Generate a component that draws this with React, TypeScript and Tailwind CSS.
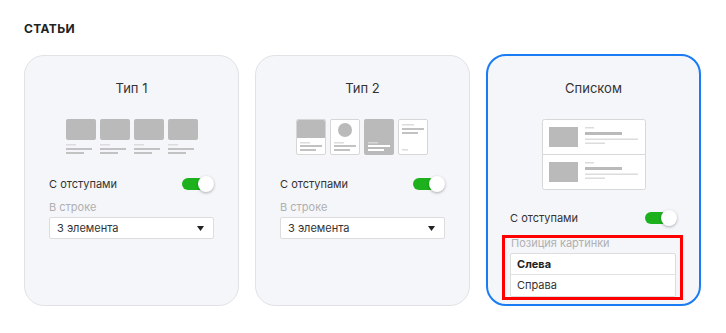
import React from "react";

const Toggle = () => (
  <div className="relative w-[32px] h-[16px] shrink-0">
    <div className="absolute left-0 top-[2px] w-[28px] h-[12px] rounded-full bg-[#1db21d]" />
    <div className="absolute right-0 top-0 w-[16px] h-[16px] rounded-full bg-white shadow-[0_1px_3px_rgba(0,0,0,0.3)]" />
  </div>
);

const Select = () => (
  <div className="mt-[3px] h-[22px] flex items-center justify-between pl-[7px] pr-[9px] bg-white border border-[#dddddd] rounded-[2px] text-[11px] text-[#333]">
    <span>3 элемента</span>
    <svg width="7" height="5" viewBox="0 0 7 5">
      <path d="M0 0 H7 L3.5 5 Z" fill="#222" />
    </svg>
  </div>
);

const Type1Art = () => (
  <svg width="132" height="36" viewBox="0 0 132 36">
    {[0, 1, 2, 3].map((i) => {
      const x = i * 34;
      return (
        <g key={i}>
          <rect x={x} y={0} width={30} height={21} rx={2} fill="#bababa" />
          <rect x={x} y={25} width={10} height={1.5} fill="#dcdcdc" />
          <rect x={x} y={29} width={26} height={2} fill="#c2c2c2" />
          <rect x={x} y={33} width={18} height={2} fill="#c2c2c2" />
        </g>
      );
    })}
  </svg>
);

const Type2Art = () => (
  <svg width="133" height="36" viewBox="0 0 133 36">
    <rect x={0.5} y={0.5} width={29} height={35} rx={1.5} fill="#fff" stroke="#d6d6d6" />
    <path d="M1 2.5 Q1 1 2.5 1 H27.5 Q29 1 29 2.5 V19 H1 Z" fill="#bababa" />
    <rect x={4} y={23} width={10} height={1.5} fill="#dcdcdc" />
    <rect x={4} y={26} width={22} height={2} fill="#c2c2c2" />
    <rect x={4} y={30} width={16} height={2} fill="#c2c2c2" />
    <rect x={34.5} y={0.5} width={29} height={35} rx={1.5} fill="#fff" stroke="#d6d6d6" />
    <circle cx={49} cy={11} r={7} fill="#bababa" />
    <rect x={38} y={23} width={10} height={1.5} fill="#dcdcdc" />
    <rect x={38} y={26} width={22} height={2} fill="#c2c2c2" />
    <rect x={38} y={30} width={16} height={2} fill="#c2c2c2" />
    <rect x={68} y={0} width={30} height={36} rx={2} fill="#bababa" />
    <rect x={72} y={23} width={10} height={1.5} fill="#d8d8d8" />
    <rect x={72} y={26} width={22} height={2} fill="#ffffff" />
    <rect x={72} y={30} width={16} height={2} fill="#ffffff" />
    <rect x={102.5} y={0.5} width={29} height={35} rx={1.5} fill="#fff" stroke="#d6d6d6" />
    <rect x={106} y={5} width={12} height={1.5} fill="#dcdcdc" />
    <rect x={106} y={9} width={22} height={2} fill="#c2c2c2" />
    <rect x={106} y={13} width={16} height={2} fill="#c2c2c2" />
    <rect x={106} y={30} width={6} height={1.5} fill="#dcdcdc" />
  </svg>
);

const ListArt = () => (
  <svg width="104" height="71" viewBox="0 0 104 71">
    <rect x={0.5} y={0.5} width={103} height={70} rx={2} fill="#fff" stroke="#d8d8d8" />
    <line x1={0.5} y1={35.5} x2={103.5} y2={35.5} stroke="#d8d8d8" />
    {[0, 35].map((dy) => (
      <g key={dy}>
        <rect x={7} y={8 + dy} width={29} height={20} fill="#bababa" />
        <rect x={43} y={8 + dy} width={9} height={1.5} fill="#dcdcdc" />
        <rect x={43} y={13 + dy} width={37} height={3} fill="#bababa" />
        <rect x={43} y={19.5 + dy} width={53} height={1.5} fill="#dcdcdc" />
        <rect x={43} y={23.5 + dy} width={20} height={1.5} fill="#dcdcdc" />
      </g>
    ))}
  </svg>
);

export default function App() {
  return (
    <div
      className="w-[726px] h-[333px] bg-white pl-[24px] pt-[22px]"
      style={{ fontFamily: "Inter, 'Noto Sans', sans-serif" }}
    >
      <div className="text-[12px] leading-[14px] font-bold text-[#222] tracking-[0.03em]">СТАТЬИ</div>
      <div className="mt-[19px] flex items-start gap-[16px]">
        <div className="w-[215px] h-[251px] rounded-[20px] border border-[#e2e2e6] bg-[#f5f6fa] flex flex-col pt-[24px] px-[24px]">
          <div className="text-center text-[13px] leading-[16px] text-[#333]">Тип 1</div>
          <div className="mt-[23px] flex justify-center">
            <Type1Art />
          </div>
          <div className="mt-[21px] flex items-center justify-between h-[16px]">
            <span className="text-[11px] text-[#333]">С отступами</span>
            <Toggle />
          </div>
          <div className="mt-[8px] text-[11px] leading-[14px] text-[#b0b0b0]">В строке</div>
          <Select />
        </div>
        <div className="w-[215px] h-[251px] rounded-[20px] border border-[#e2e2e6] bg-[#f5f6fa] flex flex-col pt-[24px] px-[24px]">
          <div className="text-center text-[13px] leading-[16px] text-[#333]">Тип 2</div>
          <div className="mt-[23px] flex justify-center">
            <Type2Art />
          </div>
          <div className="mt-[21px] flex items-center justify-between h-[16px]">
            <span className="text-[11px] text-[#333]">С отступами</span>
            <Toggle />
          </div>
          <div className="mt-[8px] text-[11px] leading-[14px] text-[#b0b0b0]">В строке</div>
          <Select />
        </div>
        <div className="-mt-px w-[215px] h-[252px] rounded-[20px] border-2 border-[#1a7cf5] bg-[#f5f6fa] flex flex-col pt-[24px] px-[22px]">
          <div className="text-center text-[13px] leading-[16px] text-[#333]">Списком</div>
          <div className="mt-[23px] flex justify-center">
            <ListArt />
          </div>
          <div className="mt-[20px] flex items-center justify-between h-[16px]">
            <span className="text-[11px] text-[#333]">С отступами</span>
            <Toggle />
          </div>
          <div className="mt-[9px] -ml-[8px] -mr-[6px] border-[3px] border-[#ff0000] pl-[5px] pr-[4px]">
            <div className="text-[11px] leading-[11px] text-[#b0b0b0] pl-[1px]">Позиция картинки</div>
            <div className="mt-[4px] bg-white border border-[#dddddd] rounded-[2px] text-[11px] text-[#333]">
              <div className="h-[21px] flex items-center pl-[6px] font-bold text-[#222] border-b border-[#e2e2e2]">Слева</div>
              <div className="h-[21px] flex items-center pl-[6px]">Справа</div>
            </div>
          </div>
        </div>
      </div>
    </div>
  );
}
